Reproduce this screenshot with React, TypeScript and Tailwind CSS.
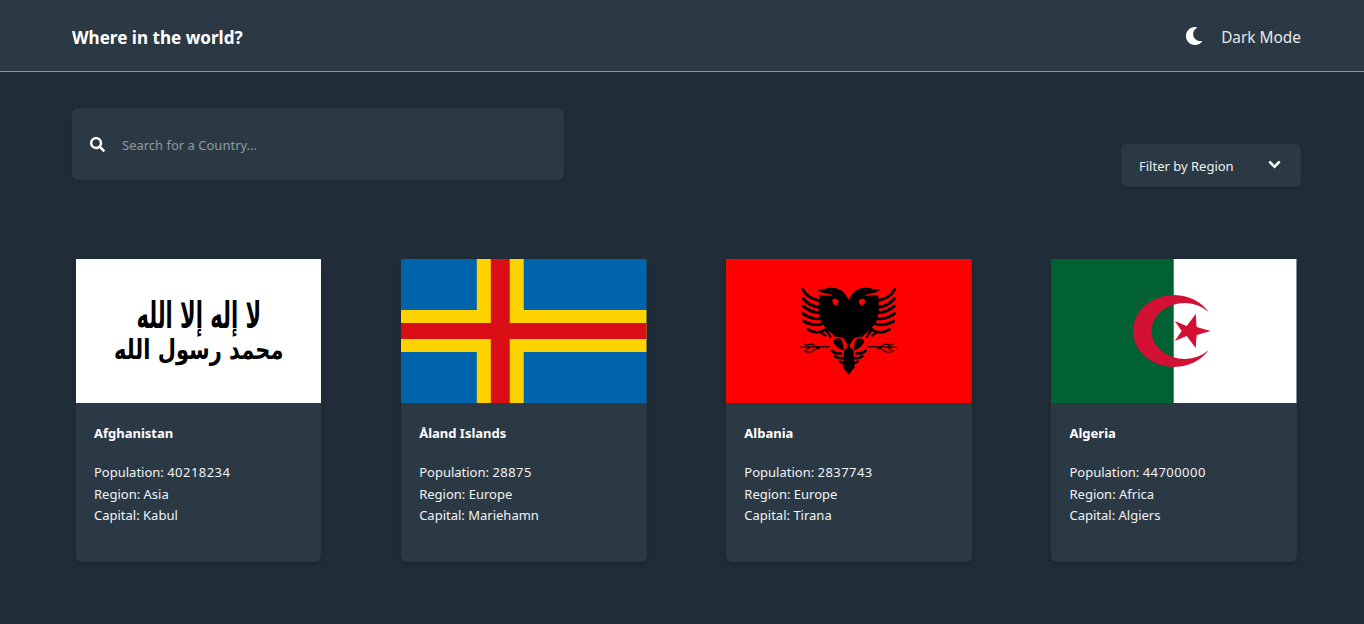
import { FaChevronDown, FaMoon, FaSearch } from 'react-icons/fa';

function AfghanistanFlag() {
  return (
    <div className="flex h-full w-full flex-col items-center justify-center bg-white font-['DejaVu_Sans',sans-serif] font-bold text-black" dir="rtl">
      <div className="-mt-[1px] scale-y-[1.75] text-[21px] leading-[38px] whitespace-nowrap">لا إله إلا الله</div>
      <div className="scale-y-[1.3] text-[21px] leading-[30px] whitespace-nowrap">محمد رسول الله</div>
    </div>
  );
}

function AlandFlag() {
  return (
    <svg viewBox="0 0 246 144" className="block h-full w-full" preserveAspectRatio="none">
      <rect width="246" height="144" fill="#0064ad" />
      <rect x="76" width="47" height="144" fill="#ffd300" />
      <rect y="51" width="246" height="42" fill="#ffd300" />
      <rect x="90" width="19" height="144" fill="#da0e15" />
      <rect y="64" width="246" height="16" fill="#da0e15" />
    </svg>
  );
}

function EagleHalf() {
  return (
    <g>
      {/* head and neck */}
      <path d="M210 92C202 84 198 70 186 62C172 51 150 51 134 57L112 60L128 68L150 72L118 76L116 120L122 150L140 178L165 198L190 204L210 232Z" fill="#000" />
      <path d="M122 71L152 73L160 78L126 75Z" fill="#f00" />
      <path d="M153 61l3-1 3 2-3 1z" fill="#f00" />
      <path d="M158 90C160 85 171 84 176 91C179 98 173 106 166 106C161 104 157 97 158 90Z" fill="#f00" />
      {/* wing feathers */}
      <g fill="none" stroke="#000" strokeWidth="9" strokeLinecap="round">
        <path d="M120 92C98 88 78 76 69 59" />
        <path d="M120 112C100 110 82 100 70 86" />
        <path d="M120 128C100 128 84 120 70 108" />
        <path d="M122 146C104 148 86 142 70 131" />
        <path d="M130 160C112 168 92 164 72 154" />
        <path d="M140 176C124 190 102 190 84 178" strokeWidth="8" />
        <path d="M136 196L122 186" strokeWidth="7" />
        <path d="M152 200L140 182" strokeWidth="7" />
        <path d="M168 198L158 182" strokeWidth="7" />
      </g>
      {/* claws */}
      <g fill="none" stroke="#000" strokeWidth="3.5" strokeLinecap="round">
        <path d="M148 230L60 232" />
        <path d="M120 236L98 222L84 224" />
        <path d="M118 232L94 246L80 246" />
        <path d="M90 232L74 244" />
        <path d="M88 231L74 222" />
      </g>
      {/* tail */}
      <path d="M180 205C190 212 192 232 192 240C176 238 162 224 160 212C166 206 174 204 180 205Z" fill="#000" />
      <g fill="none" stroke="#000" strokeWidth="8" strokeLinecap="round">
        <path d="M156 242C164 250 172 252 184 250" />
        <path d="M166 258C172 264 180 266 190 264" />
        <path d="M180 274C184 278 190 280 196 278" />
      </g>
      <path d="M207 314L189 291L193 240L210 226Z" fill="#000" />
    </g>
  );
}

function AlbaniaFlag() {
  return (
    <svg viewBox="0 0 246 144" className="block h-full w-full" preserveAspectRatio="none">
      <rect width="246" height="144" fill="#f00" />
      <g transform="translate(54 11) scale(0.3333)">
        <EagleHalf />
        <g transform="matrix(-1 0 0 1 414 0)">
          <EagleHalf />
        </g>
      </g>
    </svg>
  );
}

function AlgeriaFlag() {
  return (
    <svg viewBox="0 0 246 144" className="block h-full w-full" preserveAspectRatio="none">
      <rect width="246" height="144" fill="#fff" />
      <rect width="123" height="144" fill="#006233" />
      <path d="M158 53A41 36 0 1 0 158 91A33 28 0 1 1 158 53Z" fill="#d21034" />
      <path d="M160 72L146 76L145 89L136 77L124 82L131 72L124 62L136 67L145 55L146 68Z" fill="#d21034" />
    </svg>
  );
}

const countries = [
  { name: 'Afghanistan', population: 40218234, region: 'Asia', capital: 'Kabul', flag: <AfghanistanFlag /> },
  { name: 'Åland Islands', population: 28875, region: 'Europe', capital: 'Mariehamn', flag: <AlandFlag /> },
  { name: 'Albania', population: 2837743, region: 'Europe', capital: 'Tirana', flag: <AlbaniaFlag /> },
  { name: 'Algeria', population: 44700000, region: 'Africa', capital: 'Algiers', flag: <AlgeriaFlag /> },
];

export default function App() {
  return (
    <div className="min-h-screen bg-[#202c37] font-['Noto_Sans',sans-serif] text-white">
      {/* Header */}
      <header className="flex h-[72px] items-center justify-between border-b border-[#8b96a0] bg-[#2b3945] pl-[72px] pr-[63px] pt-[1px]">
        <h1 className="mt-[4px] text-[17.1px] font-bold">Where in the world?</h1>
        <div className="flex items-center gap-[18px] text-[#e6e8ea]">
          <FaMoon className="text-[18px] text-white" />
          <span className="mt-[3px] text-[15.4px]">Dark Mode</span>
        </div>
      </header>

      <main className="pl-[72px] pr-[63px]">
        <div className="flex items-start justify-between pt-9">
          {/* Search */}
          <div className="flex h-[72px] w-[492px] items-center gap-[17px] rounded-md bg-[#2b3945] pl-[18px] shadow-sm">
            <FaSearch className="text-[15px] text-white" />
            <input
              placeholder="Search for a Country..."
              className="flex-1 bg-transparent pt-[3px] text-[13px] outline-none placeholder:text-[#8f9aa3]"
            />
          </div>

          {/* Filter */}
          <div className="mt-9 flex h-[43px] w-[180px] items-center justify-between rounded-md bg-[#2b3945] pl-[18px] pr-[20px] text-[13px] text-[#eef0f1] shadow-sm">
            <span className="mt-[3px]">Filter by Region</span>
            <FaChevronDown className="mb-[3px] text-[13px] text-white" strokeWidth={30} />
          </div>
        </div>

        {/* Countries */}
        <div className="mt-[72px] flex justify-between pl-1 pr-[4.1px]">
          {countries.map((country) => (
            <div key={country.name} className="h-[303px] w-[245.45px] rounded-b-md bg-[#2b3945] shadow-md">
              <div className="h-[144px] overflow-hidden">{country.flag}</div>
              <div className="px-[18px] pt-[21px]">
                <h3 className="text-[13px] font-bold leading-[18px]">{country.name}</h3>
                <div className="mt-[20px] text-[13px] leading-[21.5px] text-[#f2f3f4]">
                  <p>Population: <span className="tracking-[0.45px]">{country.population}</span></p>
                  <p>Region: {country.region}</p>
                  <p>Capital: {country.capital}</p>
                </div>
              </div>
            </div>
          ))}
        </div>
      </main>
    </div>
  );
}
